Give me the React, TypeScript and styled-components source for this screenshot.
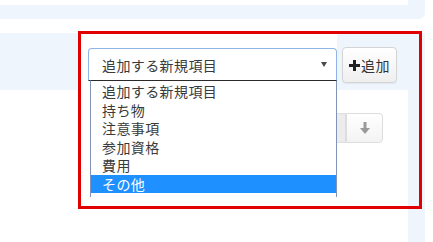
import styled, { createGlobalStyle } from 'styled-components';

const GlobalStyle = createGlobalStyle`
  html, body {
    margin: 0;
    padding: 0;
    background: #ffffff;
  }
  body {
    font-family: "Noto Sans CJK JP", "Noto Sans", sans-serif;
    color: #333333;
  }
`;

const PANEL_BLUE = '#eef5fd';

const Page = styled.div`
  position: relative;
  width: 433px;
  height: 242px;
  overflow: hidden;
  background: #ffffff;
`;

const TopPanel = styled.div`
  width: 425px;
  height: 19px;
  background: ${PANEL_BLUE};
  border-bottom-right-radius: 6px;
  margin-bottom: 14px;
`;

const TopCard = styled.div`
  width: 408px;
  height: 5px;
  background: #ffffff;
`;

const Panel = styled.div`
  width: 425px;
  height: 209px;
  background: ${PANEL_BLUE};
  display: flex;
  flex-direction: column;
`;

const Header = styled.div`
  height: 57px;
  display: flex;
  align-items: flex-start;
  padding-left: 81px;
`;

const SelectCell = styled.div`
  width: 256px;
  height: 57px;
  background: #ffffff;
  padding: 15px 0 0 7px;
  box-sizing: border-box;
`;

const Select = styled.div`
  width: 249px;
  height: 33px;
  box-sizing: border-box;
  border: 1px solid #8fb5e6;
  border-bottom: 1px solid #2a2a2a;
  border-radius: 4px 4px 0 0;
  background: #ffffff;
  display: flex;
  align-items: center;
  justify-content: space-between;
  padding: 0 9px 0 13px;
  font-size: 14px;
  letter-spacing: 0.4px;
  color: #3a3a3a;
`;

const Caret = styled.span`
  width: 0;
  height: 0;
  border-left: 3px solid transparent;
  border-right: 3px solid transparent;
  border-top: 5px solid #4a4a4a;
  margin-top: -1px;
`;

const Button = styled.button`
  margin: 14px 0 0 5px;
  width: 55px;
  height: 36px;
  box-sizing: border-box;
  border: 1px solid #d4d4d4;
  border-radius: 4px;
  background: linear-gradient(#ffffff, #efefef);
  box-shadow: 0 1px 1px rgba(0, 0, 0, 0.06);
  display: flex;
  align-items: center;
  justify-content: center;
  gap: 1px;
  padding: 0;
  font-family: inherit;
  font-size: 14px;
  letter-spacing: 0.4px;
  color: #333333;
`;

const Body = styled.div`
  flex: 1;
  width: 408px;
  background: #ffffff;
  display: flex;
  padding-top: 23px;
  padding-left: 300px;
  box-sizing: border-box;
`;

const ButtonGroup = styled.div`
  display: flex;
  height: 30px;
`;

const GroupButton = styled.div<{ active?: boolean; last?: boolean }>`
  width: ${(p) => (p.last ? '37px' : '46px')};
  height: 30px;
  box-sizing: border-box;
  border: 1px solid #dddddd;
  border-radius: ${(p) => (p.last ? '0 4px 4px 0' : '4px 0 0 4px')};
  background: ${(p) =>
    p.active ? '#ececec' : 'linear-gradient(#ffffff, #f3f3f3)'};
  display: flex;
  align-items: center;
  justify-content: center;
`;

const OptionList = styled.div`
  position: absolute;
  left: 90px;
  top: 80px;
  width: 247px;
  height: 117px;
  box-sizing: border-box;
  border-top: 1px solid #2a2a2a;
  border-left: 1px solid #8093b8;
  border-right: 1px solid #8093b8;
  background: #ffffff;
  padding-top: 1px;
  z-index: 2;
`;

const Option = styled.div<{ selected?: boolean }>`
  height: 18.5px;
  line-height: 18.5px;
  padding-left: 11px;
  font-size: 14px;
  letter-spacing: 0.4px;
  color: ${(p) => (p.selected ? '#ffffff' : '#3a3a3a')};
  background: ${(p) => (p.selected ? '#1e90ff' : 'transparent')};
  white-space: nowrap;
`;

const Annotation = styled.div`
  position: absolute;
  left: 78px;
  top: 31px;
  width: 344px;
  height: 178px;
  box-sizing: border-box;
  border: 3px solid #e00000;
  pointer-events: none;
  z-index: 3;
`;

const PlusIcon = () => (
  <svg width="11" height="11" viewBox="0 0 11 11">
    <rect x="4" y="0" width="3" height="11" fill="#222" />
    <rect x="0" y="4" width="11" height="3" fill="#222" />
  </svg>
);

const ArrowDownIcon = () => (
  <svg width="10" height="12" viewBox="0 0 10 12">
    <rect x="3.5" y="0" width="3" height="7" fill="#9a9a9a" />
    <path d="M0 6 L10 6 L5 12 Z" fill="#9a9a9a" />
  </svg>
);

const options = ['追加する新規項目', '持ち物', '注意事項', '参加資格', '費用', 'その他'];

export default function App() {
  return (
    <Page>
      <GlobalStyle />
      <TopPanel>
        <TopCard />
      </TopPanel>
      <Panel>
        <Header>
          <SelectCell>
            <Select>
              <span>追加する新規項目</span>
              <Caret />
            </Select>
          </SelectCell>
          <Button>
            <PlusIcon />
            <span>追加</span>
          </Button>
        </Header>
        <Body>
          <ButtonGroup>
            <GroupButton active />
            <GroupButton last>
              <ArrowDownIcon />
            </GroupButton>
          </ButtonGroup>
        </Body>
      </Panel>
      <OptionList>
        {options.map((o) => (
          <Option key={o} selected={o === 'その他'}>
            {o}
          </Option>
        ))}
      </OptionList>
      <Annotation />
    </Page>
  );
}
